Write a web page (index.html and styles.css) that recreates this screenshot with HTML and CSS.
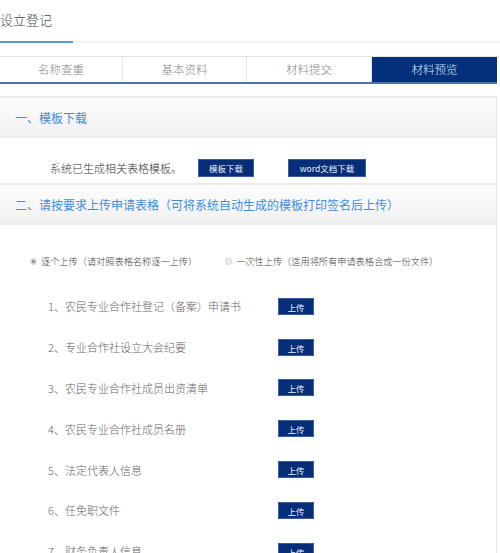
FILE: index.html
```html
<!DOCTYPE html>
<html lang="zh">
<head>
<meta charset="utf-8">
<link rel="stylesheet" href="styles.css">
</head>
<body>
<div class="page">
  <div class="title-bar">
    <div class="title">设立登记</div>
  </div>
  <div class="tabs">
    <div class="tab">名称查重</div>
    <div class="tab">基本资料</div>
    <div class="tab">材料提交</div>
    <div class="tab active">材料预览</div>
  </div>
  <div class="panel">
    <div class="sec-head">一、模板下载</div>
    <div class="dl-row">
      <span class="dl-text">系统已生成相关表格模板。</span>
      <span class="btn btn-tpl">模板下载</span>
      <span class="btn btn-word">word文档下载</span>
    </div>
    <div class="sec-head">二、请按要求上传申请表格（可将系统自动生成的模板打印签名后上传）</div>
    <div class="radio-row">
      <label class="radio-item"><span class="radio checked"></span>逐个上传（请对照表格名称逐一上传）</label>
      <label class="radio-item second"><span class="radio"></span>一次性上传（适用将所有申请表格合成一份文件）</label>
    </div>
    <div class="items">
      <div class="item"><span class="item-name">1、农民专业合作社登记（备案）申请书</span><span class="btn btn-up">上传</span></div>
      <div class="item"><span class="item-name">2、专业合作社设立大会纪要</span><span class="btn btn-up">上传</span></div>
      <div class="item"><span class="item-name">3、农民专业合作社成员出资清单</span><span class="btn btn-up">上传</span></div>
      <div class="item"><span class="item-name">4、农民专业合作社成员名册</span><span class="btn btn-up">上传</span></div>
      <div class="item"><span class="item-name">5、法定代表人信息</span><span class="btn btn-up">上传</span></div>
      <div class="item"><span class="item-name">6、任免职文件</span><span class="btn btn-up">上传</span></div>
      <div class="item"><span class="item-name">7、财务负责人信息</span><span class="btn btn-up">上传</span></div>
    </div>
  </div>
</div>
</body>
</html>
```

FILE: styles.css
```css
html, body {
  margin: 0;
  padding: 0;
  background: #fff;
}
body {
  font-family: "Microsoft YaHei", "Noto Sans CJK SC", "Noto Sans", sans-serif;
  font-weight: 300;
  color: #666;
  overflow: hidden;
}
.page {
  width: 500px;
}
.title-bar {
  height: 41px;
  border-bottom: 2px solid #eef4fb;
}
.title {
  display: inline-block;
  box-sizing: border-box;
  width: 73px;
  height: 43px;
  padding-top: 10px;
  font-size: 13px;
  line-height: 20px;
  color: #444;
  border-bottom: 2px solid #5b9bd6;
}
.tabs {
  margin-top: 13px;
  width: 497px;
  display: grid;
  grid-template-columns: 123px 124px 125px 125px;
  border-top: 1px solid #e3e3e3;
  border-bottom: 2px solid #4c72ad;
}
.tab {
  height: 25px;
  line-height: 25px;
  text-align: center;
  font-size: 11.5px;
  color: #888;
  border-right: 1px solid #e3e3e3;
}
.tab.active {
  background: #03307c;
  color: #dfe6f2;
  border-right: none;
}
.panel {
  margin-top: 12px;
  width: 497px;
  box-sizing: border-box;
  border-right: 1px solid #e6e6e6;
}
.sec-head {
  box-sizing: border-box;
  height: 42px;
  padding-left: 15px;
  line-height: 39px;
  font-size: 12px;
  font-weight: 400;
  color: #3b8de0;
  background: linear-gradient(#fdfdfd, #f1f1f1);
  border-top: 2px solid #ececec;
  border-bottom: 2px solid #ececec;
}
.dl-row {
  height: 45px;
  box-sizing: border-box;
  padding-top: 21px;
  padding-left: 50px;
  display: flex;
  align-items: flex-start;
}
.dl-text {
  font-size: 11px;
  line-height: 18px;
  color: #333;
  width: 148px;
}
.btn {
  display: inline-block;
  background: #062d78;
  color: #eef2fa;
  text-align: center;
  font-size: 8.5px;
  font-weight: 400;
  height: 18px;
  line-height: 17px;
  border: 1px solid #3a5fa0;
  box-sizing: border-box;
}
.btn-tpl {
  width: 56px;
}
.btn-word {
  width: 78px;
  margin-left: 34px;
}
.radio-row {
  margin-top: 26px;
  height: 20px;
  display: flex;
  align-items: center;
  padding-left: 30px;
  font-size: 9.2px;
  color: #444;
}
.radio-item {
  display: flex;
  align-items: center;
}
.radio-item.second {
  margin-left: 28px;
}
.radio {
  width: 7px;
  height: 7px;
  border-radius: 50%;
  border: 1px solid #d4d4d4;
  background: #eee;
  margin-right: 4px;
  box-sizing: border-box;
}
.radio.checked {
  background: radial-gradient(circle, #999 0 1.6px, #e6e6e6 2.2px);
  border-color: #cfcfcf;
}
.items {
  margin-top: 15px;
  padding-left: 48px;
}
.item {
  height: 40.8px;
  display: grid;
  grid-template-columns: 230px 36px;
  align-items: center;
}
.item-name {
  font-size: 11px;
  color: #666;
  white-space: nowrap;
}
.btn-up {
  width: 36px;
  height: 17px;
  line-height: 16px;
}
```
